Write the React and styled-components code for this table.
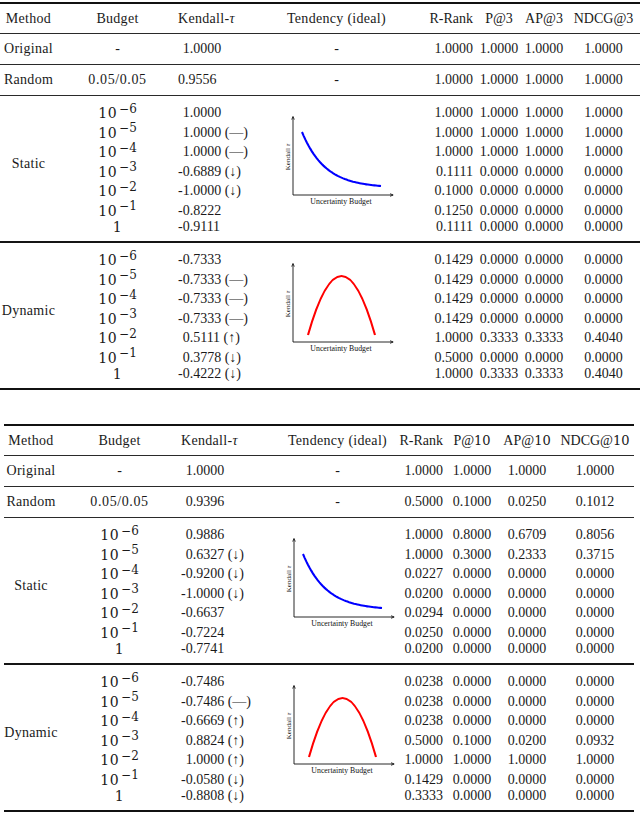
import React from 'react';
import styled, { createGlobalStyle } from 'styled-components';

const GlobalStyle = createGlobalStyle`
  html, body { margin: 0; padding: 0; background: #fff; }
  body {
    font-family: "Liberation Serif", "Times New Roman", serif;
    color: #1a1a1a;
  }
`;

const Page = styled.div`
  width: 640px;
  padding-top: 2px;
  display: flex;
  flex-direction: column;
  gap: 34px;
`;

const Table = styled.div`
  width: ${p => p.$width}px;
  margin-left: ${p => p.$left}px;
  border-top: 2px solid #111;
  border-bottom: 2px solid #111;
  font-size: 14px;
  line-height: normal;
`;

const Row = styled.div`
  display: grid;
  grid-template-columns: ${p => p.$cols};
  height: ${p => p.$h}px;
  border-top: ${p => (p.$rule ? '1px solid #2a2a2a' : 'none')};
`;

const Block = styled.div`
  display: grid;
  grid-template-columns: ${p => p.$cols};
  grid-template-rows: repeat(6, 19.5px) 14px;
  padding: 7.25px 0 6.75px;
  border-top: ${p => (p.$thick ? '2px solid #151515' : '1px solid #2a2a2a')};
`;

const justify = { left: 'flex-start', center: 'center', right: 'flex-end' };

const Cell = styled.div`
  display: flex;
  align-items: center;
  justify-content: ${p => justify[p.$align]};
  padding-right: ${p => p.$pr || 0}px;
  white-space: nowrap;
  letter-spacing: ${p => (p.$word ? '0.3px' : '0')};
`;

const MethodCell = styled.div`
  grid-column: 1;
  grid-row: 1 / -1;
  display: flex;
  align-items: center;
  justify-content: center;
  padding-bottom: 10px;
  letter-spacing: 0.3px;
`;

const ChartCell = styled.div`
  grid-column: 4;
  grid-row: 1 / -1;
  display: flex;
  justify-content: center;
  align-items: flex-start;
  padding: 10px 0 0 6px;
`;

const ChartSvg = styled.svg`
  flex-shrink: 0;
  display: block;
  overflow: visible;
`;

const Pow = styled.span`
  font-family: "DejaVu Serif", serif;
  font-size: 14px;
  letter-spacing: 0.5px;
`;

const Exp = styled.span`
  position: relative;
  top: -0.45em;
  font-size: 12px;
  margin-left: 2px;
  letter-spacing: 0;
`;

const MathNum = styled.span`
  font-family: "DejaVu Serif", serif;
  font-size: 13px;
`;

const Tau = styled.span`
  font-style: italic;
`;

const Val = styled.span`
  padding-left: ${p => (p.$indent ? '0.333em' : '0')};
`;

const Frac = styled.span`
  letter-spacing: 0.6px;
`;

const decayPath = (() => {
  const k = 3.4;
  const pts = [];
  for (let i = 0; i <= 48; i++) {
    const t = i / 48;
    const x = 20 + 79 * t;
    const y = 19 + 54 * (1 - Math.exp(-k * t)) / (1 - Math.exp(-k));
    pts.push(`${x.toFixed(2)},${y.toFixed(2)}`);
  }
  return 'M' + pts.join(' L');
})();

const archPath = 'M26,75 Q59.5,-43 93,75';

function Chart({ kind }) {
  const color = kind === 'decay' ? '#0000ff' : '#ff0000';
  return (
    <ChartSvg width="116" height="96" viewBox="0 0 116 96">
      <path d="M11 4 V82 H111" fill="none" stroke="#111" strokeWidth="0.9" />
      <path d="M9.7 6.6 L11 3.4 L12.3 6.6" fill="none" stroke="#111" strokeWidth="0.8" />
      <path d="M108 80.7 L111.2 82 L108 83.3" fill="none" stroke="#111" strokeWidth="0.8" />
      <path
        d={kind === 'decay' ? decayPath : archPath}
        fill="none"
        stroke={color}
        strokeWidth="2.1"
        strokeLinecap="butt"
      />
      <text
        x="59"
        y="91"
        textAnchor="middle"
        fontSize="7.8"
        fontFamily="Liberation Serif, serif"
        fill="#111"
      >
        Uncertainty Budget
      </text>
      <text
        transform="translate(7.6 44) rotate(-90)"
        textAnchor="middle"
        fontSize="7"
        fontFamily="Liberation Serif, serif"
        fill="#111"
      >
        Kendall <tspan fontStyle="italic">τ</tspan>
      </text>
    </ChartSvg>
  );
}

function Budget({ e }) {
  if (e === null) return <Pow>1</Pow>;
  return (
    <Pow>
      10<Exp>−{e}</Exp>
    </Pow>
  );
}

function Kendall({ v, flush }) {
  return <Val $indent={!flush && !v.startsWith('-')}>{v}</Val>;
}

const ALIGN = ['center', 'center', 'left', 'center', 'right', 'center', 'center', 'center'];

const EXPS = [6, 5, 4, 3, 2, 1, null];

const TABLES = [
  {
    width: 640,
    left: 0,
    cols: [57, 121, 107, 103, 89, 44, 46, 73],
    rPad: 4,
    head: [
      'Method',
      'Budget',
      <>Kendall-<Tau>τ</Tau></>,
      'Tendency (ideal)',
      'R-Rank',
      'P@3',
      'AP@3',
      'NDCG@3',
    ],
    simple: [
      ['Original', '-', '1.0000', false, '1.0000', '1.0000', '1.0000', '1.0000'],
      ['Random', 'frac', '0.9556', true, '1.0000', '1.0000', '1.0000', '1.0000'],
    ],
    blocks: [
      {
        name: 'Static',
        kind: 'decay',
        tau: ['1.0000', '1.0000 (—)', '1.0000 (—)', '-0.6889 (↓)', '-1.0000 (↓)', '-0.8222', '-0.9111'],
        r: ['1.0000', '1.0000', '1.0000', '0.1111', '0.1000', '0.1250', '0.1111'],
        p: ['1.0000', '1.0000', '1.0000', '0.0000', '0.0000', '0.0000', '0.0000'],
        ap: ['1.0000', '1.0000', '1.0000', '0.0000', '0.0000', '0.0000', '0.0000'],
        ndcg: ['1.0000', '1.0000', '1.0000', '0.0000', '0.0000', '0.0000', '0.0000'],
      },
      {
        name: 'Dynamic',
        kind: 'arch',
        tau: ['-0.7333', '-0.7333 (—)', '-0.7333 (—)', '-0.7333 (—)', '0.5111 (↑)', '0.3778 (↓)', '-0.4222 (↓)'],
        r: ['0.1429', '0.1429', '0.1429', '0.1429', '1.0000', '0.5000', '1.0000'],
        p: ['0.0000', '0.0000', '0.0000', '0.0000', '0.3333', '0.0000', '0.3333'],
        ap: ['0.0000', '0.0000', '0.0000', '0.0000', '0.3333', '0.0000', '0.3333'],
        ndcg: ['0.0000', '0.0000', '0.0000', '0.0000', '0.4040', '0.0000', '0.4040'],
      },
    ],
  },
  {
    width: 630,
    left: 4,
    cols: [54, 123, 109, 95, 61, 52, 58, 78],
    rPad: 3,
    head: [
      'Method',
      'Budget',
      <>Kendall-<Tau>τ</Tau></>,
      'Tendency (ideal)',
      'R-Rank',
      <>P@<MathNum>10</MathNum></>,
      <>AP@<MathNum>10</MathNum></>,
      <>NDCG@<MathNum>10</MathNum></>,
    ],
    simple: [
      ['Original', '-', '1.0000', false, '1.0000', '1.0000', '1.0000', '1.0000'],
      ['Random', 'frac', '0.9396', false, '0.5000', '0.1000', '0.0250', '0.1012'],
    ],
    blocks: [
      {
        name: 'Static',
        kind: 'decay',
        tau: ['0.9886', '0.6327 (↓)', '-0.9200 (↓)', '-1.0000 (↓)', '-0.6637', '-0.7224', '-0.7741'],
        r: ['1.0000', '1.0000', '0.0227', '0.0200', '0.0294', '0.0250', '0.0200'],
        p: ['0.8000', '0.3000', '0.0000', '0.0000', '0.0000', '0.0000', '0.0000'],
        ap: ['0.6709', '0.2333', '0.0000', '0.0000', '0.0000', '0.0000', '0.0000'],
        ndcg: ['0.8056', '0.3715', '0.0000', '0.0000', '0.0000', '0.0000', '0.0000'],
      },
      {
        name: 'Dynamic',
        kind: 'arch',
        tau: ['-0.7486', '-0.7486 (—)', '-0.6669 (↑)', '0.8824 (↑)', '1.0000 (↑)', '-0.0580 (↓)', '-0.8808 (↓)'],
        r: ['0.0238', '0.0238', '0.0238', '0.5000', '1.0000', '0.1429', '0.3333'],
        p: ['0.0000', '0.0000', '0.0000', '0.1000', '1.0000', '0.0000', '0.0000'],
        ap: ['0.0000', '0.0000', '0.0000', '0.0200', '1.0000', '0.0000', '0.0000'],
        ndcg: ['0.0000', '0.0000', '0.0000', '0.0932', '1.0000', '0.0000', '0.0000'],
      },
    ],
  },
];

function ResultTable({ t }) {
  const cols = t.cols.map(c => `${c}px`).join(' ');
  const pr = i => (ALIGN[i] === 'right' ? t.rPad : 0);
  return (
    <Table $width={t.width} $left={t.left}>
      <Row $cols={cols} $h={29}>
        {t.head.map((h, i) => (
          <Cell key={i} $align={ALIGN[i]} $pr={pr(i)} $word={i < 4}>
            {h}
          </Cell>
        ))}
      </Row>
      {t.simple.map(s => (
        <Row key={s[0]} $cols={cols} $h={30} $rule>
          <Cell $align="center" $word>{s[0]}</Cell>
          <Cell $align="center">{s[1] === 'frac' ? <Frac>0.05/0.05</Frac> : s[1]}</Cell>
          <Cell $align="left"><Kendall v={s[2]} flush={s[3]} /></Cell>
          <Cell $align="center">-</Cell>
          <Cell $align="right" $pr={t.rPad}>{s[4]}</Cell>
          <Cell $align="center">{s[5]}</Cell>
          <Cell $align="center">{s[6]}</Cell>
          <Cell $align="center">{s[7]}</Cell>
        </Row>
      ))}
      {t.blocks.map((b, bi) => (
        <Block key={b.name} $cols={cols} $thick={bi > 0}>
          <MethodCell>{b.name}</MethodCell>
          <ChartCell>
            <Chart kind={b.kind} />
          </ChartCell>
          {EXPS.map((e, i) => (
            <React.Fragment key={i}>
              <Cell $align="center"><Budget e={e} /></Cell>
              <Cell $align="left"><Kendall v={b.tau[i]} /></Cell>
              <Cell $align="right" $pr={t.rPad}>{b.r[i]}</Cell>
              <Cell $align="center">{b.p[i]}</Cell>
              <Cell $align="center">{b.ap[i]}</Cell>
              <Cell $align="center">{b.ndcg[i]}</Cell>
            </React.Fragment>
          ))}
        </Block>
      ))}
    </Table>
  );
}

export default function App() {
  return (
    <>
      <GlobalStyle />
      <Page>
        {TABLES.map((t, i) => (
          <ResultTable key={i} t={t} />
        ))}
      </Page>
    </>
  );
}
